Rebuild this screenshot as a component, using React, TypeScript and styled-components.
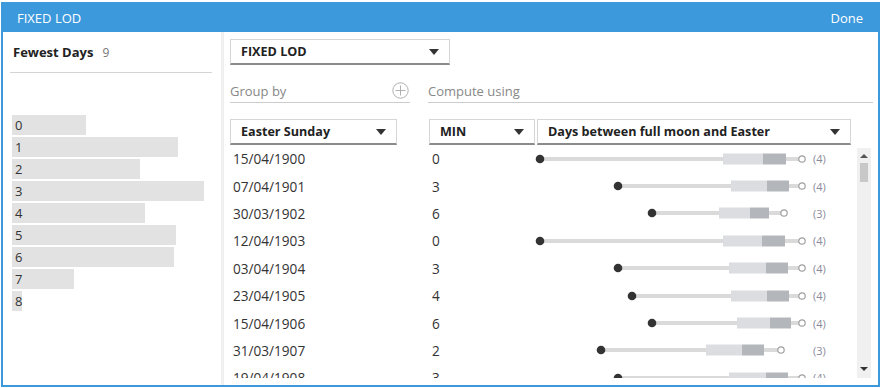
import styled, { createGlobalStyle } from "styled-components";

const GlobalStyle = createGlobalStyle`
  body {
    margin: 0;
    background: #ffffff;
    font-family: "Open Sans", "Noto Sans", sans-serif;
    color: #333333;
  }
`;

const Frame = styled.div`
  box-sizing: border-box;
  margin: 2px 0 0 1px;
  width: 879px;
  height: 385px;
  border: 2px solid #3c99dc;
  display: flex;
  flex-direction: column;
  overflow: hidden;
`;

const TitleBar = styled.div`
  height: 28px;
  flex-shrink: 0;
  background: #3c99dc;
  color: #ffffff;
  font-size: 13px;
  display: flex;
  align-items: center;
  justify-content: space-between;
  padding: 0 15px 0 14px;
`;

const Body = styled.div`
  flex: 1;
  display: flex;
  min-height: 0;
`;

const LeftPanel = styled.div`
  width: 221px;
  flex-shrink: 0;
  padding: 0 9px 0 7px;
  box-sizing: border-box;
  border-right: 3px solid #f0f0f0;
`;

const FieldHeader = styled.div`
  height: 40px;
  display: flex;
  align-items: center;
  gap: 9px;
  padding-left: 3px;
  border-bottom: 1px solid #d4d4d4;
  font-size: 13px;
`;

const FieldName = styled.span`
  font-weight: 700;
  color: #222222;
`;

const FieldCount = styled.span`
  color: #777777;
  font-size: 12px;
`;

const Bars = styled.div`
  margin-top: 42px;
  display: flex;
  flex-direction: column;
  gap: 2px;
  padding-left: 2px;
`;

const Bar = styled.div`
  height: 20px;
  background: #e2e2e2;
  font-size: 13px;
  line-height: 20px;
  padding-left: 3px;
  box-sizing: border-box;
  white-space: nowrap;
  color: #333333;
`;

const RightPanel = styled.div`
  flex: 1;
  padding: 7px 0 7px 6px;
  display: flex;
  flex-direction: column;
  min-width: 0;
`;

const Select = styled.div<{ $width: number }>`
  box-sizing: border-box;
  width: ${(p) => p.$width}px;
  height: 26px;
  flex-shrink: 0;
  border: 1px solid #d6d6d6;
  border-bottom: 2px solid #8a8a8a;
  display: flex;
  align-items: center;
  justify-content: space-between;
  padding: 0 10px 0 10px;
  font-size: 12.6px;
  font-weight: 700;
  color: #222222;
  white-space: nowrap;
`;

const Caret = styled.span`
  width: 0;
  height: 0;
  border-left: 5px solid transparent;
  border-right: 5px solid transparent;
  border-top: 6px solid #333333;
`;

const ShelfRow = styled.div`
  display: flex;
  margin-top: 14px;
  height: 24px;
`;

const Shelf = styled.div<{ $width: number; $gap?: number }>`
  box-sizing: border-box;
  width: ${(p) => p.$width}px;
  margin-right: ${(p) => p.$gap ?? 0}px;
  border-bottom: 1px solid #cccccc;
  display: flex;
  align-items: center;
  justify-content: space-between;
  font-size: 13px;
  color: #888888;
  padding-right: 1px;
`;

const HeaderRow = styled.div`
  display: flex;
  margin-top: 16px;
`;

const Spacer = styled.div<{ $width: number }>`
  width: ${(p) => p.$width}px;
  flex-shrink: 0;
`;

const TableArea = styled.div`
  flex: 1;
  display: flex;
  min-height: 0;
  overflow: hidden;
`;

const Rows = styled.div`
  width: 621px;
  flex-shrink: 0;
`;

const Row = styled.div`
  display: flex;
  height: 27.4px;
  align-items: center;
  font-size: 13.6px;
  color: #333333;
`;

const DateCell = styled.div`
  width: 199px;
  padding-left: 3px;
  box-sizing: border-box;
`;

const ValueCell = styled.div`
  width: 108px;
  padding-left: 3px;
  box-sizing: border-box;
`;

const ChartCell = styled.div`
  width: 314px;
  height: 100%;
  position: relative;
  display: flex;
  align-items: center;
`;

const Mark = styled.svg`
  display: block;
  overflow: visible;
`;

const Count = styled.span`
  position: absolute;
  left: 276px;
  font-size: 11px;
  color: #8a8a9a;
`;

const Scrollbar = styled.div`
  width: 14px;
  margin: 3px 0 0 6px;
  background: #f0f0f0;
  display: flex;
  flex-direction: column;
  align-items: center;
  padding-top: 6px;
  box-sizing: border-box;
`;

const ArrowUp = styled.span`
  width: 0;
  height: 0;
  border-left: 4px solid transparent;
  border-right: 4px solid transparent;
  border-bottom: 4px solid #555555;
`;

const ArrowDown = styled.span`
  width: 0;
  height: 0;
  border-left: 4px solid transparent;
  border-right: 4px solid transparent;
  border-top: 4px solid #333333;
  margin-bottom: 7px;
`;

const Thumb = styled.div`
  width: 8px;
  height: 19px;
  background: #c8c8c8;
  margin-top: 5px;
  flex: 0 0 auto;
`;

const Fill = styled.div`
  flex: 1;
`;

const fewest = [
  { label: "0", w: 74 },
  { label: "1", w: 166 },
  { label: "2", w: 128 },
  { label: "3", w: 192 },
  { label: "4", w: 133 },
  { label: "5", w: 164 },
  { label: "6", w: 162 },
  { label: "7", w: 62 },
  { label: "8", w: 10 },
];

// absolute x positions from the view: dot, light box, dark box start, dark end, end circle
const rows = [
  { date: "15/04/1900", min: 0, c: [540, 723, 763, 786, 802], n: 4 },
  { date: "07/04/1901", min: 3, c: [618, 731, 767, 789, 802], n: 4 },
  { date: "30/03/1902", min: 6, c: [652, 719, 750, 769, 784], n: 3 },
  { date: "12/04/1903", min: 0, c: [540, 723, 762, 785, 802], n: 4 },
  { date: "03/04/1904", min: 3, c: [618, 729, 766, 788, 802], n: 4 },
  { date: "23/04/1905", min: 4, c: [632, 731, 767, 789, 802], n: 4 },
  { date: "15/04/1906", min: 6, c: [652, 737, 770, 791, 802], n: 4 },
  { date: "31/03/1907", min: 2, c: [601, 706, 742, 764, 781], n: 3 },
  { date: "19/04/1908", min: 3, c: [618, 729, 766, 788, 802], n: 4 },
];

const X0 = 537;

function RangeMark({ c }: { c: number[] }) {
  const [dot, l, d, e, end] = c.map((v) => v - X0);
  return (
    <Mark width="280" height="14" viewBox="0 0 280 14">
      <line x1={dot} y1="7" x2={end} y2="7" stroke="#dadada" strokeWidth="4" />
      <rect x={l} y="1.5" width={d - l} height="11" fill="#dcdde0" />
      <rect x={d} y="1.5" width={e - d} height="11" fill="#b3b7bb" />
      <circle cx={end} cy="7" r="3.2" fill="#ffffff" stroke="#a0a0a0" strokeWidth="1.2" />
      <circle cx={dot} cy="7" r="4.3" fill="#333333" />
    </Mark>
  );
}

export default function App() {
  return (
    <>
      <GlobalStyle />
      <Frame>
        <TitleBar>
          <span>FIXED LOD</span>
          <span>Done</span>
        </TitleBar>
        <Body>
          <LeftPanel>
            <FieldHeader>
              <FieldName>Fewest Days</FieldName>
              <FieldCount>9</FieldCount>
            </FieldHeader>
            <Bars>
              {fewest.map((b) => (
                <Bar key={b.label} style={{ width: b.w }}>
                  {b.label}
                </Bar>
              ))}
            </Bars>
          </LeftPanel>
          <RightPanel>
            <Select $width={220}>
              <span>FIXED LOD</span>
              <Caret />
            </Select>
            <ShelfRow>
              <Shelf $width={180} $gap={18}>
                <span>Group by</span>
                <svg width="17" height="17" viewBox="0 0 17 17">
                  <circle cx="8.5" cy="8.5" r="7.7" fill="none" stroke="#b0b0b0" strokeWidth="1" />
                  <line x1="8.5" y1="3.5" x2="8.5" y2="13.5" stroke="#b0b0b0" strokeWidth="1" />
                  <line x1="3.5" y1="8.5" x2="13.5" y2="8.5" stroke="#b0b0b0" strokeWidth="1" />
                </svg>
              </Shelf>
              <Shelf $width={445}>
                <span>Compute using</span>
              </Shelf>
            </ShelfRow>
            <HeaderRow>
              <Select $width={167}>
                <span>Easter Sunday</span>
                <Caret />
              </Select>
              <Spacer $width={32} />
              <Select $width={106}>
                <span>MIN</span>
                <Caret />
              </Select>
              <Spacer $width={2} />
              <Select $width={314}>
                <span>Days between full moon and Easter</span>
                <Caret />
              </Select>
            </HeaderRow>
            <TableArea>
              <Rows>
                {rows.map((r) => (
                  <Row key={r.date}>
                    <DateCell>{r.date}</DateCell>
                    <ValueCell>{r.min}</ValueCell>
                    <ChartCell>
                      <RangeMark c={r.c} />
                      <Count>({r.n})</Count>
                    </ChartCell>
                  </Row>
                ))}
              </Rows>
              <Scrollbar>
                <ArrowUp />
                <Thumb />
                <Fill />
                <ArrowDown />
              </Scrollbar>
            </TableArea>
          </RightPanel>
        </Body>
      </Frame>
    </>
  );
}
